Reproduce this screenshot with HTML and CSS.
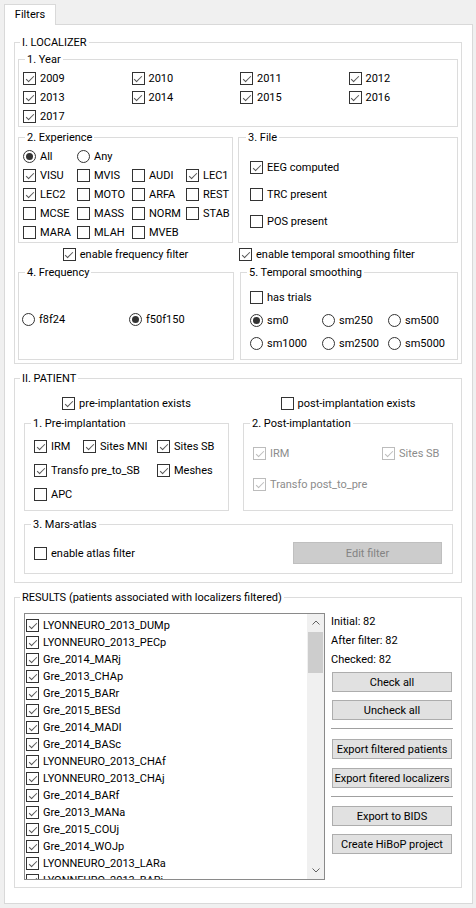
FILE: index.html
```html
<!DOCTYPE html>
<html>
<head>
<meta charset="utf-8">
<link rel="stylesheet" href="styles.css">
</head>
<body>
<div class="tabs"><div class="tab">Filters</div></div>
<div class="panel">

  <fieldset class="grp">
    <legend class="top">I. LOCALIZER</legend>
    <div class="loc-body">

      <fieldset class="grp">
        <legend>1. Year</legend>
        <div class="year-grid">
          <label class="chk"><span class="cb on"></span>2009</label>
          <label class="chk"><span class="cb on"></span>2010</label>
          <label class="chk"><span class="cb on"></span>2011</label>
          <label class="chk"><span class="cb on"></span>2012</label>
          <label class="chk"><span class="cb on"></span>2013</label>
          <label class="chk"><span class="cb on"></span>2014</label>
          <label class="chk"><span class="cb on"></span>2015</label>
          <label class="chk"><span class="cb on"></span>2016</label>
          <label class="chk"><span class="cb on"></span>2017</label>
        </div>
      </fieldset>

      <div class="row2">
        <fieldset class="grp">
          <legend>2. Experience</legend>
          <div class="exp-grid">
            <label class="chk"><span class="rb on"></span>All</label>
            <label class="chk"><span class="rb"></span>Any</label>
            <span class="span2"></span>
            <label class="chk"><span class="cb on"></span>VISU</label>
            <label class="chk"><span class="cb"></span>MVIS</label>
            <label class="chk"><span class="cb"></span>AUDI</label>
            <label class="chk"><span class="cb on"></span>LEC1</label>
            <label class="chk"><span class="cb on"></span>LEC2</label>
            <label class="chk"><span class="cb"></span>MOTO</label>
            <label class="chk"><span class="cb"></span>ARFA</label>
            <label class="chk"><span class="cb"></span>REST</label>
            <label class="chk"><span class="cb"></span>MCSE</label>
            <label class="chk"><span class="cb"></span>MASS</label>
            <label class="chk"><span class="cb"></span>NORM</label>
            <label class="chk"><span class="cb"></span>STAB</label>
            <label class="chk"><span class="cb"></span>MARA</label>
            <label class="chk"><span class="cb"></span>MLAH</label>
            <label class="chk"><span class="cb"></span>MVEB</label>
          </div>
        </fieldset>
        <fieldset class="grp">
          <legend class="l7">3. File</legend>
          <div class="file-list">
            <label class="chk"><span class="cb on"></span>EEG computed</label>
            <label class="chk"><span class="cb"></span>TRC present</label>
            <label class="chk"><span class="cb"></span>POS present</label>
          </div>
        </fieldset>
      </div>

      <div class="enable-row">
        <div class="en-left"><label class="chk"><span class="cb on"></span>enable frequency filter</label></div>
        <div class="en-right"><label class="chk"><span class="cb on"></span>enable temporal smoothing filter</label></div>
      </div>

      <div class="row3">
        <fieldset class="grp">
          <legend>4. Frequency</legend>
          <div class="freq-body">
            <label class="chk"><span class="rb"></span>f8f24</label>
            <label class="chk"><span class="rb on"></span>f50f150</label>
          </div>
        </fieldset>
        <fieldset class="grp">
          <legend>5. Temporal smoothing</legend>
          <div class="temp-body">
            <label class="chk"><span class="cb"></span>has trials</label>
            <div class="temp-grid">
              <label class="chk"><span class="rb on"></span>sm0</label>
              <label class="chk"><span class="rb"></span>sm250</label>
              <label class="chk"><span class="rb"></span>sm500</label>
              <label class="chk"><span class="rb"></span>sm1000</label>
              <label class="chk"><span class="rb"></span>sm2500</label>
              <label class="chk"><span class="rb"></span>sm5000</label>
            </div>
          </div>
        </fieldset>
      </div>

    </div>
  </fieldset>

  <fieldset class="grp sect">
    <legend class="top">II. PATIENT</legend>
    <div class="pat-body">
      <div class="exists-row">
        <div class="cell"><label class="chk"><span class="cb on"></span>pre-implantation exists</label></div>
        <div class="cell"><label class="chk"><span class="cb"></span>post-implantation exists</label></div>
      </div>
      <div class="impl-row">
        <fieldset class="grp">
          <legend>1. Pre-implantation</legend>
          <div class="pre-grid">
            <label class="chk"><span class="cb on"></span>IRM</label>
            <label class="chk"><span class="cb on"></span>Sites MNI</label>
            <label class="chk"><span class="cb on"></span>Sites SB</label>
            <label class="chk span2"><span class="cb on"></span>Transfo pre_to_SB</label>
            <label class="chk"><span class="cb on"></span>Meshes</label>
            <label class="chk"><span class="cb"></span>APC</label>
          </div>
        </fieldset>
        <fieldset class="grp">
          <legend>2. Post-implantation</legend>
          <div class="post-grid">
            <label class="chk dis"><span class="cb on"></span>IRM</label>
            <label class="chk dis"><span class="cb on"></span>Sites SB</label>
            <label class="chk dis span2"><span class="cb on"></span>Transfo post_to_pre</label>
          </div>
        </fieldset>
      </div>
      <fieldset class="grp mars">
        <legend>3. Mars-atlas</legend>
        <div class="mars-body">
          <label class="chk"><span class="cb"></span>enable atlas filter</label>
          <div class="btn-dis">Edit filter</div>
        </div>
      </fieldset>
    </div>
  </fieldset>

  <fieldset class="grp sect">
    <legend class="top">RESULTS (patients associated with localizers filtered)</legend>
    <div class="res-body">
      <div class="list">
        <div class="items">
          <div class="item"><span class="cb on"></span>LYONNEURO_2013_DUMp</div>
          <div class="item"><span class="cb on"></span>LYONNEURO_2013_PECp</div>
          <div class="item"><span class="cb on"></span>Gre_2014_MARj</div>
          <div class="item"><span class="cb on"></span>Gre_2013_CHAp</div>
          <div class="item"><span class="cb on"></span>Gre_2015_BARr</div>
          <div class="item"><span class="cb on"></span>Gre_2015_BESd</div>
          <div class="item"><span class="cb on"></span>Gre_2014_MADl</div>
          <div class="item"><span class="cb on"></span>Gre_2014_BASc</div>
          <div class="item"><span class="cb on"></span>LYONNEURO_2013_CHAf</div>
          <div class="item"><span class="cb on"></span>LYONNEURO_2013_CHAj</div>
          <div class="item"><span class="cb on"></span>Gre_2014_BARf</div>
          <div class="item"><span class="cb on"></span>Gre_2013_MANa</div>
          <div class="item"><span class="cb on"></span>Gre_2015_COUj</div>
          <div class="item"><span class="cb on"></span>Gre_2014_WOJp</div>
          <div class="item"><span class="cb on"></span>LYONNEURO_2013_LARa</div>
          <div class="item"><span class="cb on"></span>LYONNEURO_2013_BARj</div>
          <div class="item"><span class="cb on"></span>Gre_2015_GUIm</div>
        </div>
        <div class="sb">
          <div class="sb-btn"><svg width="8" height="5" viewBox="0 0 8 5"><path d="M0.5 4.5 L4 1 L7.5 4.5" fill="none" stroke="#606060" stroke-width="1"/></svg></div>
          <div class="thumb"></div>
          <div class="sb-fill"></div>
          <div class="sb-btn"><svg width="8" height="5" viewBox="0 0 8 5"><path d="M0.5 0.5 L4 4 L7.5 0.5" fill="none" stroke="#606060" stroke-width="1"/></svg></div>
        </div>
      </div>
      <div class="side">
        <div class="stat">Initial: 82</div>
        <div class="stat">After filter: 82</div>
        <div class="stat">Checked: 82</div>
        <div class="btn mt3">Check all</div>
        <div class="btn mt8">Uncheck all</div>
        <div class="sep mt8"></div>
        <div class="btn mt10">Export filtered patients</div>
        <div class="btn mt9">Export fitered localizers</div>
        <div class="sep mt8"></div>
        <div class="btn mt9">Export to BIDS</div>
        <div class="btn mt8">Create HiBoP project</div>
      </div>
    </div>
  </fieldset>

</div>
</body>
</html>
```

FILE: styles.css
```css
* { box-sizing: border-box; }
html, body { margin: 0; padding: 0; }
body {
  width: 476px;
  height: 908px;
  overflow: hidden;
  background: #f0f0f0;
  font-family: Roboto, "Liberation Sans", sans-serif;
  font-size: 11px;
  color: #000;
}

.tabs { height: 24px; padding: 4px 0 0 4px; }
.tab {
  position: relative;
  z-index: 1;
  width: 52px;
  height: 21px;
  background: #fff;
  border: 1px solid #d9d9d9;
  border-bottom: 0;
  display: flex;
  align-items: center;
  justify-content: center;
  padding-bottom: 1px;
}

.panel {
  margin-left: 4px;
  width: 469px;
  height: 880px;
  background: #fff;
  border: 1px solid #d9d9d9;
  padding: 11px 10px 0 9px;
}

fieldset.grp {
  margin: 0;
  padding: 0;
  border: 1px solid #dcdcdc;
  min-width: 0;
}
fieldset.sect { margin-top: 8px; }
fieldset.mars { margin-top: 7px; }
legend {
  padding: 0 2px;
  margin-left: 6px;
  height: 13px;
  line-height: 13px;
  white-space: nowrap;
}
legend.top { margin-left: 5px; }
legend.l7 { margin-left: 7px; }

.chk {
  display: flex;
  align-items: center;
  gap: 4px;
  white-space: nowrap;
  height: 19px;
}
.cb {
  width: 13px;
  height: 13px;
  flex: none;
  border: 1px solid #333;
  background: #fff;
  display: flex;
  align-items: center;
  justify-content: center;
}
.cb.on::after {
  content: "";
  width: 3px;
  height: 7px;
  border: solid #555;
  border-width: 0 1px 1px 0;
  transform: translate(0, -1px) rotate(45deg);
}
.rb {
  width: 13px;
  height: 13px;
  flex: none;
  border: 1px solid #333;
  border-radius: 50%;
  background: #fff;
  display: flex;
  align-items: center;
  justify-content: center;
}
.rb.on::after {
  content: "";
  width: 7px;
  height: 7px;
  border-radius: 50%;
  background: #333;
}
.span2 { grid-column: span 2; }

.dis { color: #8c8c8c; }
.dis .cb { border-color: #bcbcbc; }
.dis .cb.on::after { border-color: #bcbcbc; }

/* Localizer */
.loc-body { padding: 4px 3px 3px; }
.year-grid {
  display: grid;
  grid-template-columns: repeat(4, 1fr);
  grid-auto-rows: 19px;
  padding: 3px 0 0 4px;
}
.row2 {
  display: grid;
  grid-template-columns: 215px 1fr;
  column-gap: 5px;
  margin-top: 4px;
}
.exp-grid {
  display: grid;
  grid-template-columns: 54px 55px 54px 1fr;
  grid-auto-rows: 19px;
  padding: 3px 0 0 4px;
}
.file-list {
  display: flex;
  flex-direction: column;
  gap: 8px;
  padding: 14px 0 0 11px;
}
.enable-row {
  display: grid;
  grid-template-columns: 215px 1fr;
  column-gap: 5px;
  height: 19px;
  margin-top: 2px;
}
.en-left { display: flex; justify-content: center; }
.en-right { display: flex; padding-left: 1px; }
.row3 {
  display: grid;
  grid-template-columns: 216px 1fr;
  column-gap: 6px;
  margin-top: 2px;
}
.freq-body {
  display: grid;
  grid-template-columns: 107px 1fr;
  padding: 31px 0 0 3px;
}
.temp-body { padding: 9px 0 6px 9px; }
.temp-grid {
  display: grid;
  grid-template-columns: 72px 66px 1fr;
  grid-auto-rows: 19px;
  row-gap: 4px;
  margin-top: 4px;
}

/* Patient */
.pat-body { padding: 9px 8px 8px 9px; }
.exists-row {
  display: grid;
  grid-template-columns: 205px 1fr;
  column-gap: 14px;
  height: 19px;
}
.exists-row .cell { display: flex; justify-content: center; }
.impl-row {
  display: grid;
  grid-template-columns: 205px 1fr;
  column-gap: 14px;
  margin-top: 4px;
}
.pre-grid {
  display: grid;
  grid-template-columns: 49px 74px 1fr;
  grid-auto-rows: 19px;
  row-gap: 5px;
  padding: 7px 0 6px 9px;
}
.post-grid {
  display: grid;
  grid-template-columns: 129px 1fr;
  grid-auto-rows: 19px;
  row-gap: 12px;
  padding: 14px 0 0 9px;
}
.mars-body {
  display: flex;
  align-items: center;
  justify-content: space-between;
  padding: 11px 10px 9px 9px;
}
.btn-dis {
  width: 149px;
  height: 22px;
  background: #cccccc;
  border: 1px solid #bfbfbf;
  color: #838383;
  display: flex;
  align-items: center;
  justify-content: center;
}

/* Results */
.res-body {
  display: grid;
  grid-template-columns: 301px 1fr;
  column-gap: 6px;
  padding: 9px 8px 7px 9px;
}
.list {
  height: 267px;
  border: 1px solid #8a8a8a;
  background: #fff;
  display: flex;
}
.items {
  flex: 1;
  overflow: hidden;
  padding: 3px 0 0 1px;
}
.item {
  height: 17px;
  display: flex;
  align-items: center;
  gap: 4px;
  white-space: nowrap;
}
.sb {
  width: 17px;
  flex: none;
  background: #f0f0f0;
  display: flex;
  flex-direction: column;
}
.sb-btn {
  height: 17px;
  flex: none;
  display: flex;
  align-items: center;
  justify-content: center;
}
.thumb {
  height: 41px;
  margin: 1px 1px 0 1px;
  background: #cdcdcd;
}
.sb-fill { flex: 1; }

.side { margin-top: -1px; }
.stat { line-height: 19px; height: 19px; }
.btn {
  height: 20px;
  margin-left: 1px;
  margin-right: 1px;
  background: #e1e1e1;
  border: 1px solid #adadad;
  display: flex;
  align-items: center;
  justify-content: center;
  white-space: nowrap;
}
.sep { height: 1px; background: #a0a0a0; }
.mt3 { margin-top: 3px; }
.mt8 { margin-top: 8px; }
.mt9 { margin-top: 9px; }
.mt10 { margin-top: 10px; }
```
